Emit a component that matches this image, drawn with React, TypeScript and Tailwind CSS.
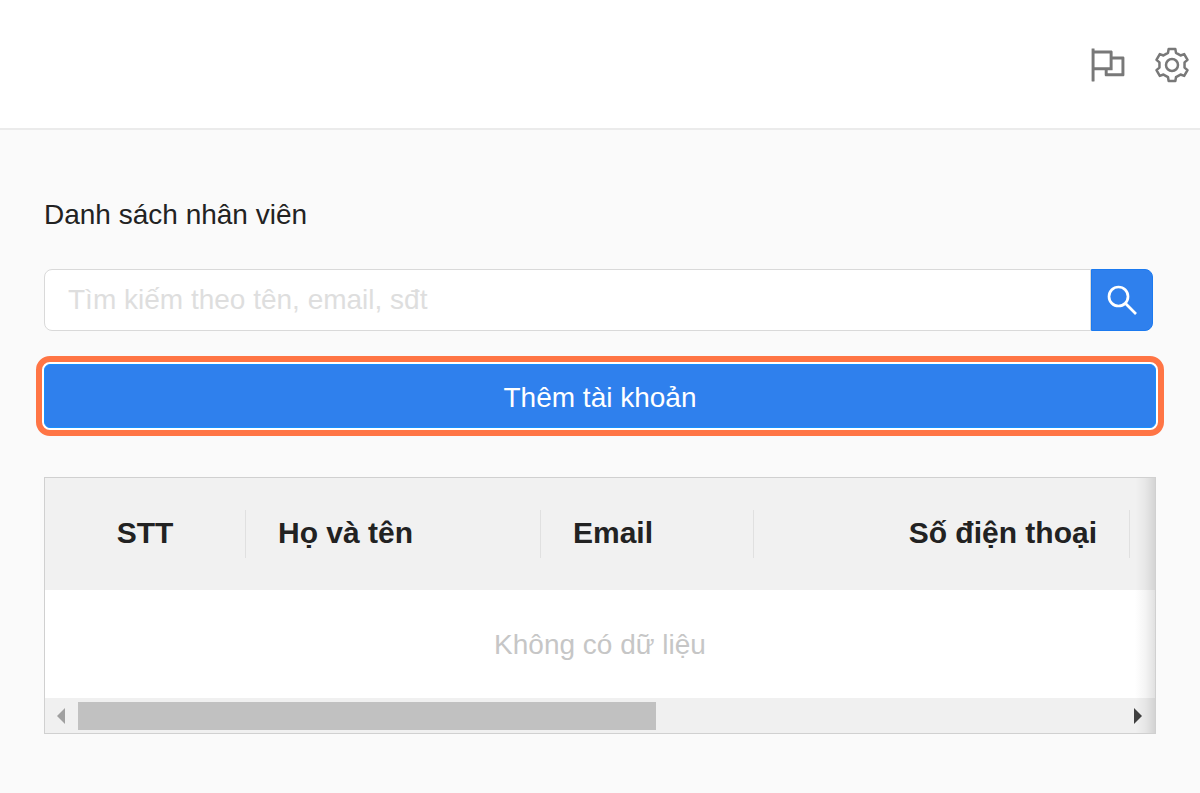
import { AiOutlineFlag } from "react-icons/ai";

const columns = [
  { title: "STT", width: "w-[201px]", align: "text-center" },
  { title: "Họ và tên", width: "w-[295px]", align: "text-left" },
  { title: "Email", width: "w-[213px]", align: "text-left" },
  { title: "Số điện thoại", width: "w-94", align: "text-right" },
];

// One tooth of the gear, pointing up, repeated every 60 degrees.
const tooth = [
  [-12, -36.5],
  [-10, -48],
  [10, -48],
  [12, -36.5],
];

const gearPoints = [0, 1, 2, 3, 4, 5]
  .flatMap((step) => {
    const angle = (step * Math.PI) / 3;
    return tooth.map(([x, y]) => {
      const px = x * Math.cos(angle) - y * Math.sin(angle);
      const py = x * Math.sin(angle) + y * Math.cos(angle);
      return `${px.toFixed(2)},${py.toFixed(2)}`;
    });
  })
  .join(" ");

function GearIcon() {
  return (
    <svg width="42" height="42" viewBox="-63 -63 126 126" fill="none" stroke="currentColor" strokeWidth="7.5" strokeLinejoin="round">
      <polygon points={gearPoints} />
      <circle r="18" />
    </svg>
  );
}

function SearchIcon() {
  return (
    <svg width="36" height="36" viewBox="0 0 36 36" fill="none" stroke="currentColor" strokeWidth="2.7">
      <circle cx="14.5" cy="14.5" r="9.5" />
      <path d="M21.3 21.3 32 32" />
    </svg>
  );
}

function Header() {
  return (
    <header className="flex h-[130px] items-center justify-end gap-[22px] border-b-2 border-[#ebebeb] bg-white pt-0.5 pr-[7px] text-[#787878]">
      <button type="button" aria-label="Flag">
        <AiOutlineFlag size={42} />
      </button>
      <button type="button" aria-label="Settings">
        <GearIcon />
      </button>
    </header>
  );
}

function SearchBar() {
  return (
    <form className="mr-[3px] flex h-[62px]" onSubmit={(e) => e.preventDefault()}>
      <input
        type="search"
        aria-label="Tìm kiếm"
        placeholder="Tìm kiếm theo tên, email, sđt"
        className="min-w-0 flex-1 rounded-l-lg border border-[#d9d9d9] bg-white px-[23px] text-[28px] outline-none placeholder:text-[#dedede]"
      />
      <button
        type="submit"
        aria-label="Tìm"
        className="flex w-[62px] items-center justify-center rounded-r-lg border border-[#1b7af0] bg-[#2f80ed] text-white"
      >
        <SearchIcon />
      </button>
    </form>
  );
}

function StaffTable() {
  return (
    <div className="relative overflow-hidden border border-[#d0d0d0] bg-white">
      <table className="w-full table-fixed border-collapse">
        <thead className="bg-[#f1f1f1] text-[30px] leading-[46px] text-[#222222]">
          <tr>
            {columns.map((column) => (
              <th key={column.title} className={`${column.width} py-8 font-bold`}>
                <div className={`border-r border-[#e0e0e0] px-8 pb-0.5 ${column.align}`}>{column.title}</div>
              </th>
            ))}
            <td />
          </tr>
        </thead>
        <tbody>
          <tr>
            <td colSpan={5} className="h-27 pt-0.5 text-center text-[28px] text-[#c6c6c6]">
              Không có dữ liệu
            </td>
          </tr>
        </tbody>
      </table>
      <div className="flex h-[35px] bg-[#f0f0f0] pt-1" aria-hidden="true">
        <svg className="w-[33px] shrink-0" height="28" viewBox="0 0 33 28">
          <path d="M20 6v16l-8-8z" fill="#a0a0a0" />
        </svg>
        <div className="flex-1">
          <div className="h-7 w-[55.4%] bg-[#c1c1c1]" />
        </div>
        <svg className="w-[33px] shrink-0" height="28" viewBox="0 0 33 28">
          <path d="M12 6v16l8-8z" fill="#404040" />
        </svg>
      </div>
      <div className="pointer-events-none absolute inset-y-0 right-0 w-5 bg-linear-to-l from-black/12 via-black/4 to-transparent" />
    </div>
  );
}

export default function App() {
  return (
    <div className="min-h-screen bg-[#fafafa] font-['Liberation_Sans',Arial,sans-serif]">
      <Header />
      <main className="px-11 pt-16 pb-14">
        <h1 className="text-[28px] leading-[42px] text-[#222222]">Danh sách nhân viên</h1>
        <div className="pt-[33px]">
          <SearchBar />
        </div>
        <button
          type="button"
          className="mt-[33px] block h-16 w-full rounded-md border border-[#1890ff] bg-[#2f80ed] pt-1 text-[28px] text-white ring-2 ring-white outline-6 outline-offset-2 outline-[#ff7545]"
        >
          Thêm tài khoản
        </button>
        <div className="pt-[49px]">
          <StaffTable />
        </div>
      </main>
    </div>
  );
}
